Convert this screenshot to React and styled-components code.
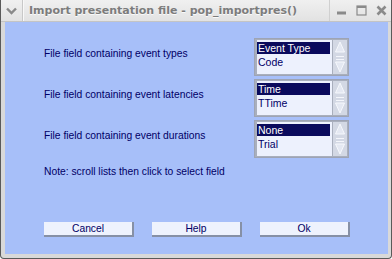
import React from 'react';
import styled, { createGlobalStyle } from 'styled-components';

const GlobalStyle = createGlobalStyle`
  html, body { margin: 0; padding: 0; background: #ffffff; }
  body { font-family: "Liberation Sans", Arial, sans-serif; }
`;

const Window = styled.div`
  width: 392px;
  height: 259px;
  box-sizing: border-box;
  display: flex;
  flex-direction: column;
  background: #d9d9d9;
  border: 1px solid #5a5a5a;
  border-top: none;
  border-radius: 0 0 4px 4px;
  overflow: hidden;
`;

const TitleBar = styled.div`
  height: 21px;
  flex: none;
  display: flex;
  align-items: center;
  background: linear-gradient(#f0f0f0, #e2e2e2);
  border-bottom: 1px solid #c4c4c4;
`;

const MenuBtn = styled.div`
  width: 21px;
  height: 21px;
  display: flex;
  align-items: center;
  justify-content: center;
  border-right: 1px solid #c8c8c8;
  box-shadow: 1px 0 0 #f8f8f8;
`;

const Title = styled.div`
  flex: 1;
  margin-left: 6px;
  font-family: "DejaVu Sans", sans-serif;
  font-weight: bold;
  font-size: 11px;
  color: #7c7c7c;
  white-space: nowrap;
  text-shadow: 0 1px 0 #fafafa;
`;

const Controls = styled.div`
  display: flex;
  align-items: center;
  gap: 9px;
  padding-right: 4px;
  border-left: 1px solid #d0d0d0;
  padding-left: 6px;
  height: 21px;
`;

const Body = styled.div`
  flex: 1;
  margin: 0 3px 4px 4px;
  background: #a7bff9;
  display: flex;
  flex-direction: column;
  padding: 16px 0 0 39px;
  color: #000066;
`;

const Rows = styled.div`
  display: flex;
  flex-direction: column;
  gap: 3px;
`;

const Row = styled.div`
  display: flex;
  align-items: flex-start;
  height: 38px;
`;

const Label = styled.div`
  width: 210px;
  font-size: 10.3px;
  padding-top: 10px;
`;

const ListBox = styled.div`
  display: flex;
  width: 95px;
  height: 38px;
  box-sizing: border-box;
  border: 1px solid #9ea4b4;
  background: #a9afbd;
  padding: 1px 1px 1px 2px;
  gap: 1px;
`;

const Items = styled.div`
  flex: 1;
  background: #edf1fd;
  padding: 2px 0 0 0;
`;

const Item = styled.div`
  height: 12px;
  line-height: 12px;
  font-size: 10.5px;
  padding-left: 1px;
  margin-right: 2px;
  background: ${p => (p.$selected ? '#0a0a5c' : 'transparent')};
  color: ${p => (p.$selected ? '#ffffff' : '#000066')};
  margin-bottom: 2px;
`;

const Scroll = styled.div`
  width: 14px;
  background: #d3d8e4;
  display: flex;
  flex-direction: column;
  justify-content: space-between;
  align-items: center;
  padding: 1px 0;
`;

const Note = styled.div`
  font-size: 10.3px;
  margin-top: 8px;
`;

const Buttons = styled.div`
  display: flex;
  gap: 18px;
  margin-top: 45px;
`;

const Button = styled.div`
  width: 90px;
  height: 15px;
  box-sizing: border-box;
  background: #eef2fd;
  border-right: 2px solid #8690a6;
  border-bottom: 2px solid #8690a6;
  font-size: 10.3px;
  text-align: center;
  line-height: 14px;
  color: #000066;
`;

const Chevron = () => (
  <svg width="11" height="8" viewBox="0 0 11 8">
    <path d="M1 1.5 L5.5 6 L10 1.5" fill="none" stroke="#8a8a8a" strokeWidth="2.4" />
  </svg>
);

const MinIcon = () => (
  <svg width="11" height="11" viewBox="0 0 11 11">
    <rect x="1" y="6.5" width="9" height="3" fill="#8a8a8a" />
  </svg>
);

const MaxIcon = () => (
  <svg width="11" height="11" viewBox="0 0 11 11">
    <rect x="1" y="1" width="9" height="9" fill="none" stroke="#8a8a8a" strokeWidth="1.2" />
    <rect x="1" y="1" width="9" height="2" fill="#8a8a8a" />
  </svg>
);

const CloseIcon = () => (
  <svg width="11" height="11" viewBox="0 0 11 11">
    <path d="M1.5 1.5 L9.5 9.5 M9.5 1.5 L1.5 9.5" stroke="#8a8a8a" strokeWidth="2.6" />
  </svg>
);

const ScrollArrows = () => (
  <Scroll>
    <svg width="12" height="13" viewBox="0 0 12 13">
      <path d="M6 1 L10.5 11 L1.5 11 Z" fill="#e4e8f2" stroke="#f6f8fc" strokeWidth="1" />
    </svg>
    <svg width="12" height="6" viewBox="0 0 12 6">
      <path d="M2 1.5 H10 M2 4.5 H10" stroke="#f4f6fb" strokeWidth="1.2" />
    </svg>
    <svg width="12" height="12" viewBox="0 0 12 12">
      <path d="M1.5 1 L10.5 1 L6 11 Z" fill="#e4e8f2" stroke="#f6f8fc" strokeWidth="1" />
    </svg>
  </Scroll>
);

const fields = [
  { label: 'File field containing event types', items: ['Event Type', 'Code'] },
  { label: 'File field containing event latencies', items: ['Time', 'TTime'] },
  { label: 'File field containing event durations', items: ['None', 'Trial'] },
];

export default function App() {
  return (
    <>
      <GlobalStyle />
      <Window>
        <TitleBar>
          <MenuBtn><Chevron /></MenuBtn>
          <Title>Import presentation file - pop_importpres()</Title>
          <Controls>
            <MinIcon />
            <MaxIcon />
            <CloseIcon />
          </Controls>
        </TitleBar>
        <Body>
          <Rows>
            {fields.map(f => (
              <Row key={f.label}>
                <Label>{f.label}</Label>
                <ListBox>
                  <Items>
                    {f.items.map((it, i) => (
                      <Item key={it} $selected={i === 0}>{it}</Item>
                    ))}
                  </Items>
                  <ScrollArrows />
                </ListBox>
              </Row>
            ))}
          </Rows>
          <Note>Note: scroll lists then click to select field</Note>
          <Buttons>
            <Button>Cancel</Button>
            <Button>Help</Button>
            <Button>Ok</Button>
          </Buttons>
        </Body>
      </Window>
    </>
  );
}
